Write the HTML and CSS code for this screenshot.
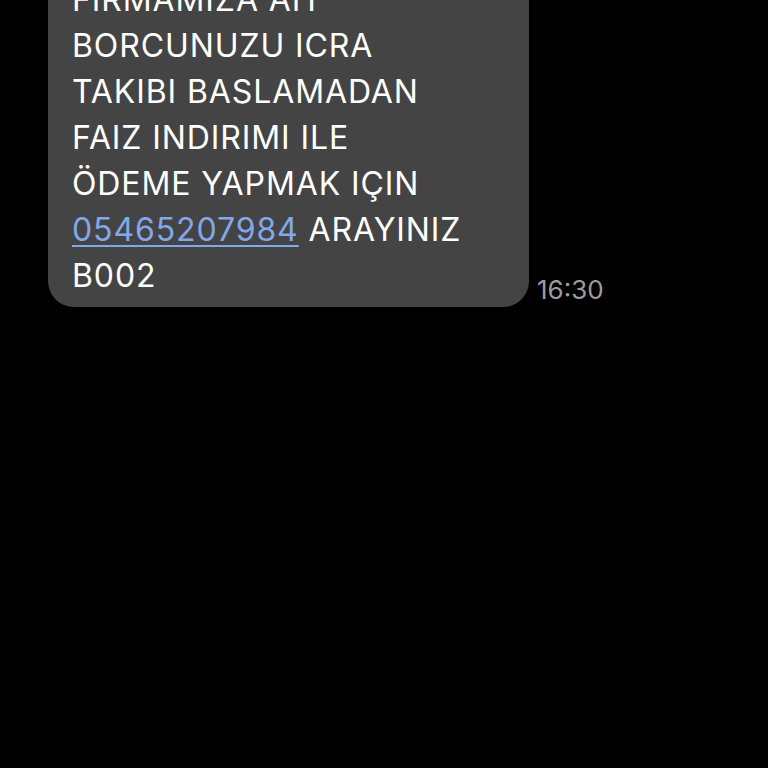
FILE: index.html
```html
<!DOCTYPE html>
<html lang="tr">
<head>
<meta charset="utf-8">
<link rel="stylesheet" href="styles.css">
</head>
<body>
<div class="thread">
  <div class="row">
    <div class="bubble">
      <p class="msg">FIRMAMIZA AIT<br>BORCUNUZU ICRA<br>TAKIBI BASLAMADAN<br>FAIZ INDIRIMI ILE<br>ÖDEME YAPMAK IÇIN<br><a class="phone" href="#">05465207984</a> ARAYINIZ<br>B002</p>
    </div>
    <span class="time">16:30</span>
  </div>
</div>
</body>
</html>
```
FILE: styles.css
```css
html, body {
  margin: 0;
  padding: 0;
  background: #000;
  width: 768px;
  height: 768px;
  overflow: hidden;
}
.thread {
  padding-left: 48px;
  margin-top: -33px;
  font-family: Inter, "Liberation Sans", Arial, sans-serif;
}
.row {
  display: flex;
  align-items: flex-end;
  gap: 8px;
}
.bubble {
  width: 481px;
  box-sizing: border-box;
  background: #444444;
  border-radius: 26px;
  padding: 10px 20px 8px 24px;
}
.msg {
  margin: 0;
  color: #fff;
  font-size: 32px;
  letter-spacing: 0.9px;
  line-height: 46px;
}
.phone {
  color: #82a8ea;
  text-decoration: underline;
  text-decoration-thickness: 2px;
  text-underline-offset: 4px;
}
.time {
  color: #9c9c9c;
  font-size: 26px;
  line-height: 30px;
  margin-bottom: 2px;
}
```
